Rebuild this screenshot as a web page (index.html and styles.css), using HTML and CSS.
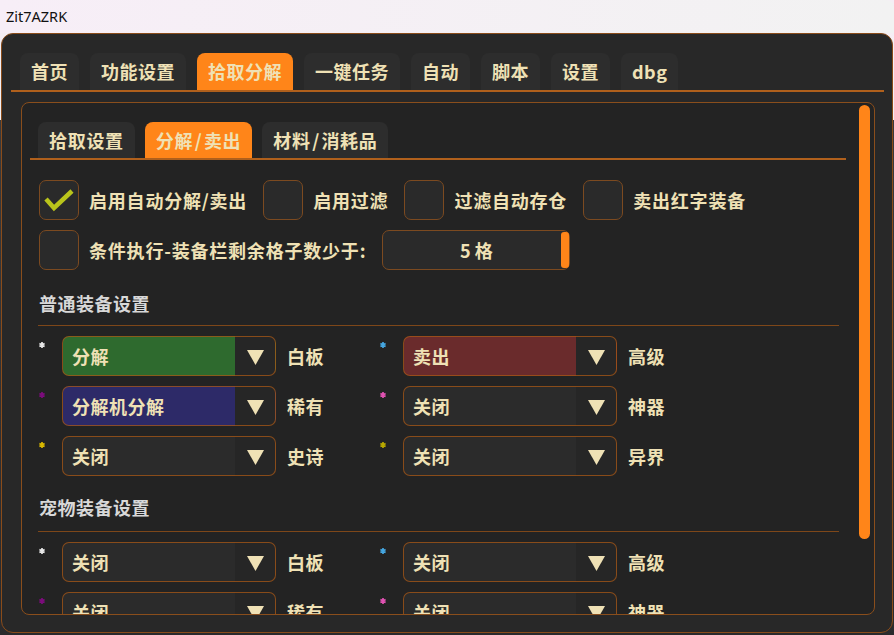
FILE: index.html
```html
<!DOCTYPE html>
<html lang="zh-CN">
<head>
<meta charset="utf-8">
<title>Zit7AZRK</title>
<link rel="stylesheet" href="styles.css">
</head>
<body>
<div class="titlebar">Zit7AZRK</div>
<div class="window">
  <div class="tabbar">
    <div class="tab">首页</div>
    <div class="tab">功能设置</div>
    <div class="tab active">拾取分解</div>
    <div class="tab">一键任务</div>
    <div class="tab">自动</div>
    <div class="tab">脚本</div>
    <div class="tab">设置</div>
    <div class="tab">dbg</div>
  </div>
  <div class="panel">
    <div class="content">
      <div class="subtabbar">
        <div class="tab">拾取设置</div>
        <div class="tab active">分解<span class="sl">/</span>卖出</div>
        <div class="tab">材料<span class="sl">/</span>消耗品</div>
      </div>

      <div class="checks">
        <div class="check-row">
          <div class="check-item">
            <div class="cb checked"><svg viewBox="0 0 40 40" width="40" height="40"><polyline points="7,19 15,28 33,11" fill="none" stroke="#b9c41b" stroke-width="4.5"/></svg></div>
            <span class="cb-label">启用自动分解/卖出</span>
          </div>
          <div class="check-item">
            <div class="cb"></div>
            <span class="cb-label">启用过滤</span>
          </div>
          <div class="check-item">
            <div class="cb"></div>
            <span class="cb-label">过滤自动存仓</span>
          </div>
          <div class="check-item">
            <div class="cb"></div>
            <span class="cb-label">卖出红字装备</span>
          </div>
        </div>
        <div class="check-row">
          <div class="check-item">
            <div class="cb"></div>
            <span class="cb-label">条件执行-装备栏剩余格子数少于:</span>
          </div>
          <div class="spinbox">
            <span class="spin-value">5 格</span>
            <span class="spin-bar"></span>
          </div>
        </div>
      </div>

      <div class="section-title">普通装备设置</div>
      <div class="combo-grid">
        <div class="combo-cell">
          <svg class="dot" viewBox="0 0 6 6" width="6" height="6"><path d="M3 0V6M0.4 1.5L5.6 4.5M0.4 4.5L5.6 1.5" stroke="#e6e6e6" stroke-width="1.7"/></svg>
          <div class="combo green"><span class="combo-text">分解</span><span class="combo-arrow"><svg viewBox="0 0 17 15" width="17" height="15"><polygon points="0,0 17,0 8.5,15" fill="#efe1b5"/></svg></span></div>
          <span class="combo-label">白板</span>
        </div>
        <div class="combo-cell">
          <svg class="dot" viewBox="0 0 6 6" width="6" height="6"><path d="M3 0V6M0.4 1.5L5.6 4.5M0.4 4.5L5.6 1.5" stroke="#45a6e0" stroke-width="1.7"/></svg>
          <div class="combo red"><span class="combo-text">卖出</span><span class="combo-arrow"><svg viewBox="0 0 17 15" width="17" height="15"><polygon points="0,0 17,0 8.5,15" fill="#efe1b5"/></svg></span></div>
          <span class="combo-label">高级</span>
        </div>
        <div class="combo-cell">
          <svg class="dot" viewBox="0 0 6 6" width="6" height="6"><path d="M3 0V6M0.4 1.5L5.6 4.5M0.4 4.5L5.6 1.5" stroke="#7c0c7c" stroke-width="1.7"/></svg>
          <div class="combo blue"><span class="combo-text">分解机分解</span><span class="combo-arrow"><svg viewBox="0 0 17 15" width="17" height="15"><polygon points="0,0 17,0 8.5,15" fill="#efe1b5"/></svg></span></div>
          <span class="combo-label">稀有</span>
        </div>
        <div class="combo-cell">
          <svg class="dot" viewBox="0 0 6 6" width="6" height="6"><path d="M3 0V6M0.4 1.5L5.6 4.5M0.4 4.5L5.6 1.5" stroke="#e052b2" stroke-width="1.7"/></svg>
          <div class="combo"><span class="combo-text">关闭</span><span class="combo-arrow"><svg viewBox="0 0 17 15" width="17" height="15"><polygon points="0,0 17,0 8.5,15" fill="#efe1b5"/></svg></span></div>
          <span class="combo-label">神器</span>
        </div>
        <div class="combo-cell">
          <svg class="dot" viewBox="0 0 6 6" width="6" height="6"><path d="M3 0V6M0.4 1.5L5.6 4.5M0.4 4.5L5.6 1.5" stroke="#d9b800" stroke-width="1.7"/></svg>
          <div class="combo"><span class="combo-text">关闭</span><span class="combo-arrow"><svg viewBox="0 0 17 15" width="17" height="15"><polygon points="0,0 17,0 8.5,15" fill="#efe1b5"/></svg></span></div>
          <span class="combo-label">史诗</span>
        </div>
        <div class="combo-cell">
          <svg class="dot" viewBox="0 0 6 6" width="6" height="6"><path d="M3 0V6M0.4 1.5L5.6 4.5M0.4 4.5L5.6 1.5" stroke="#b8a800" stroke-width="1.7"/></svg>
          <div class="combo"><span class="combo-text">关闭</span><span class="combo-arrow"><svg viewBox="0 0 17 15" width="17" height="15"><polygon points="0,0 17,0 8.5,15" fill="#efe1b5"/></svg></span></div>
          <span class="combo-label">异界</span>
        </div>
      </div>

      <div class="section-title second">宠物装备设置</div>
      <div class="combo-grid">
        <div class="combo-cell">
          <svg class="dot" viewBox="0 0 6 6" width="6" height="6"><path d="M3 0V6M0.4 1.5L5.6 4.5M0.4 4.5L5.6 1.5" stroke="#e6e6e6" stroke-width="1.7"/></svg>
          <div class="combo"><span class="combo-text">关闭</span><span class="combo-arrow"><svg viewBox="0 0 17 15" width="17" height="15"><polygon points="0,0 17,0 8.5,15" fill="#efe1b5"/></svg></span></div>
          <span class="combo-label">白板</span>
        </div>
        <div class="combo-cell">
          <svg class="dot" viewBox="0 0 6 6" width="6" height="6"><path d="M3 0V6M0.4 1.5L5.6 4.5M0.4 4.5L5.6 1.5" stroke="#45a6e0" stroke-width="1.7"/></svg>
          <div class="combo"><span class="combo-text">关闭</span><span class="combo-arrow"><svg viewBox="0 0 17 15" width="17" height="15"><polygon points="0,0 17,0 8.5,15" fill="#efe1b5"/></svg></span></div>
          <span class="combo-label">高级</span>
        </div>
        <div class="combo-cell">
          <svg class="dot" viewBox="0 0 6 6" width="6" height="6"><path d="M3 0V6M0.4 1.5L5.6 4.5M0.4 4.5L5.6 1.5" stroke="#7c0c7c" stroke-width="1.7"/></svg>
          <div class="combo"><span class="combo-text">关闭</span><span class="combo-arrow"><svg viewBox="0 0 17 15" width="17" height="15"><polygon points="0,0 17,0 8.5,15" fill="#efe1b5"/></svg></span></div>
          <span class="combo-label">稀有</span>
        </div>
        <div class="combo-cell">
          <svg class="dot" viewBox="0 0 6 6" width="6" height="6"><path d="M3 0V6M0.4 1.5L5.6 4.5M0.4 4.5L5.6 1.5" stroke="#e052b2" stroke-width="1.7"/></svg>
          <div class="combo"><span class="combo-text">关闭</span><span class="combo-arrow"><svg viewBox="0 0 17 15" width="17" height="15"><polygon points="0,0 17,0 8.5,15" fill="#efe1b5"/></svg></span></div>
          <span class="combo-label">神器</span>
        </div>
      </div>
    </div>
    <div class="scrolltrack"><div class="thumb"></div></div>
  </div>
</div>
</body>
</html>
```

FILE: styles.css
```css
html, body {
  margin: 0;
  padding: 0;
}
body {
  width: 894px;
  height: 635px;
  overflow: hidden;
  background: linear-gradient(to bottom, #f5eef5 0, #f3eff3 120px, #3a3a3c 120px, #2a2a2c 100%);
  font-family: "Noto Sans CJK SC", "Noto Sans", sans-serif;
}
.titlebar {
  height: 33px;
  line-height: 33px;
  padding-left: 6px;
  font-family: "Noto Sans", "Open Sans", sans-serif;
  font-size: 14.5px;
  color: #111;
  background: linear-gradient(to right, #f7eef7, #f2f2f2);
  border-top-right-radius: 8px;
}
.window {
  box-sizing: border-box;
  height: 600px;
  margin: 0 1px;
  border: 1px solid #8a4c1a;
  border-radius: 12px;
  background: #282828;
  padding-top: 19px;
  display: flex;
  flex-direction: column;
}
.tabbar {
  display: flex;
  gap: 11px;
  margin: 0 8px 0 9px;
  padding-left: 9px;
  border-bottom: 2px solid #b0601c;
}
.tab {
  height: 37px;
  line-height: 37px;
  padding: 0 11px;
  background: #2d2d2d;
  border-radius: 8px 8px 0 0;
  color: #efe1b5;
  font-weight: bold;
  font-size: 18px;
  letter-spacing: 0.5px;
}
.tab.active {
  background: #ff8519;
}
.panel {
  flex: 1;
  min-height: 0;
  margin: 10px 17px 17px 19px;
  border: 1px solid #8a4e1c;
  border-radius: 8px;
  background: #232323;
  display: flex;
  overflow: hidden;
}
.content {
  flex: 1;
  min-width: 0;
  padding-top: 19px;
  overflow: hidden;
}
.scrolltrack {
  width: 11px;
  margin: 2px 4px 0 3px;
}
.thumb {
  height: 434px;
  border-radius: 6px;
  background: #ff8519;
}
.subtabbar {
  display: flex;
  gap: 10px;
  margin: 0 10px 0 8px;
  padding-left: 8px;
  border-bottom: 2px solid #b0601c;
}
.subtabbar .tab {
  height: 36px;
  line-height: 36px;
  letter-spacing: 0.7px;
}
.sl {
  margin: 0 1.5px;
}
.checks {
  padding-left: 17px;
  margin-top: 20px;
  display: flex;
  flex-direction: column;
  gap: 10px;
}
.check-row {
  display: flex;
  align-items: center;
  gap: 16px;
}
.check-item {
  display: flex;
  align-items: center;
  gap: 10px;
}
.cb {
  box-sizing: border-box;
  width: 40px;
  height: 40px;
  border: 1.5px solid #7c4a20;
  border-radius: 7px;
  background: #2a2a2a;
}
.cb svg {
  display: block;
  margin: -1.5px;
}
.cb-label {
  color: #efe1b5;
  font-weight: bold;
  font-size: 18px;
  letter-spacing: 0.8px;
}
.spinbox {
  box-sizing: border-box;
  width: 188px;
  height: 40px;
  border: 1px solid #7c4a20;
  border-radius: 7px;
  background: #2a2a2a;
  display: flex;
  align-items: stretch;
  padding: 1px 0 1px 8px;
}
.spin-value {
  flex: 1;
  text-align: center;
  line-height: 36px;
  color: #efe1b5;
  font-weight: bold;
  font-size: 18px;
}
.spin-bar {
  width: 8px;
  border-radius: 3px;
  background: #ff8519;
}
.section-title {
  margin: 20px 17px 0 16px;
  padding: 0 0 9px 1px;
  height: 26px;
  line-height: 26px;
  border-bottom: 1px solid #7e4719;
  color: #d8d8d8;
  font-weight: bold;
  font-size: 18px;
  letter-spacing: 0.5px;
}
.section-title.second {
  margin-top: 18px;
  padding-bottom: 11px;
}
.combo-grid {
  margin-top: 10px;
  padding-left: 17px;
  display: grid;
  grid-template-columns: 341px 341px;
  row-gap: 10px;
}
.combo-cell {
  display: flex;
  align-items: center;
}
.dot {
  align-self: flex-start;
  margin: 6px 17px 0 0;
  flex: none;
}
.combo {
  box-sizing: border-box;
  width: 214px;
  height: 40px;
  border: 1px solid rgba(170, 88, 22, 0.75);
  border-radius: 7px;
  background: linear-gradient(to right, #2b2b2b calc(100% - 40px), #262626 0);
  display: flex;
  align-items: center;
  padding-left: 9px;
}
.combo.green {
  background: linear-gradient(to right, #2e6a2e calc(100% - 40px), #262626 0);
}
.combo.blue {
  background: linear-gradient(to right, #2d2a68 calc(100% - 40px), #262626 0);
}
.combo.red {
  background: linear-gradient(to right, #6a2b2c calc(100% - 40px), #262626 0);
}
.combo-text {
  flex: 1;
  color: #efe1b5;
  font-weight: bold;
  font-size: 18px;
  letter-spacing: 0.5px;
}
.combo-arrow {
  width: 39px;
  display: flex;
  justify-content: center;
  align-items: center;
  padding-top: 2px;
}
.combo-arrow svg {
  display: block;
}
.combo-label {
  margin-left: 11px;
  color: #efe1b5;
  font-weight: bold;
  font-size: 18px;
  letter-spacing: 0.5px;
}
```
